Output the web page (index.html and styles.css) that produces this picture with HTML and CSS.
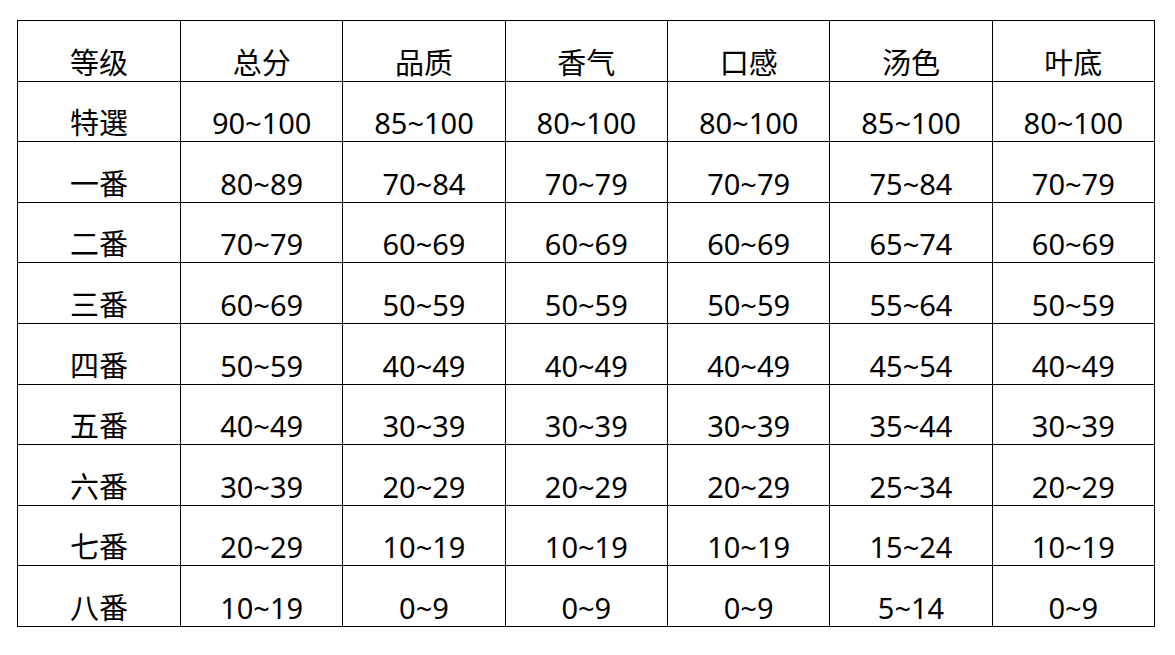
FILE: index.html
```html
<!DOCTYPE html>
<html lang="zh">
<head>
<meta charset="utf-8">
<link rel="stylesheet" href="styles.css">
</head>
<body>
<table class="grade">
<colgroup><col class="c1"><col><col><col><col><col><col></colgroup>
<tr><td>等级</td><td>总分</td><td>品质</td><td>香气</td><td>口感</td><td>汤色</td><td>叶底</td></tr>
<tr><td>特選</td><td>90~100</td><td>85~100</td><td>80~100</td><td>80~100</td><td>85~100</td><td>80~100</td></tr>
<tr><td>一番</td><td>80~89</td><td>70~84</td><td>70~79</td><td>70~79</td><td>75~84</td><td>70~79</td></tr>
<tr><td>二番</td><td>70~79</td><td>60~69</td><td>60~69</td><td>60~69</td><td>65~74</td><td>60~69</td></tr>
<tr><td>三番</td><td>60~69</td><td>50~59</td><td>50~59</td><td>50~59</td><td>55~64</td><td>50~59</td></tr>
<tr><td>四番</td><td>50~59</td><td>40~49</td><td>40~49</td><td>40~49</td><td>45~54</td><td>40~49</td></tr>
<tr><td>五番</td><td>40~49</td><td>30~39</td><td>30~39</td><td>30~39</td><td>35~44</td><td>30~39</td></tr>
<tr><td>六番</td><td>30~39</td><td>20~29</td><td>20~29</td><td>20~29</td><td>25~34</td><td>20~29</td></tr>
<tr><td>七番</td><td>20~29</td><td>10~19</td><td>10~19</td><td>10~19</td><td>15~24</td><td>10~19</td></tr>
<tr><td>八番</td><td>10~19</td><td>0~9</td><td>0~9</td><td>0~9</td><td>5~14</td><td>0~9</td></tr>
</table>
</body>
</html>
```
FILE: styles.css
```css
html, body {
  margin: 0;
  padding: 0;
  background: #fff;
}
body {
  padding: 20px 0 0 17px;
  font-family: "Noto Sans", "Noto Sans CJK SC", sans-serif;
  color: #000;
}
.grade {
  border-collapse: collapse;
  table-layout: fixed;
  width: 1138px;
}
.grade col.c1 {
  width: 163px;
}
.grade td {
  border: 1px solid #000;
  height: 60.6px;
  padding: 0 0 1px 0;
  box-sizing: border-box;
  vertical-align: bottom;
  text-align: center;
  font-size: 29px;
  line-height: 34px;
}
```
